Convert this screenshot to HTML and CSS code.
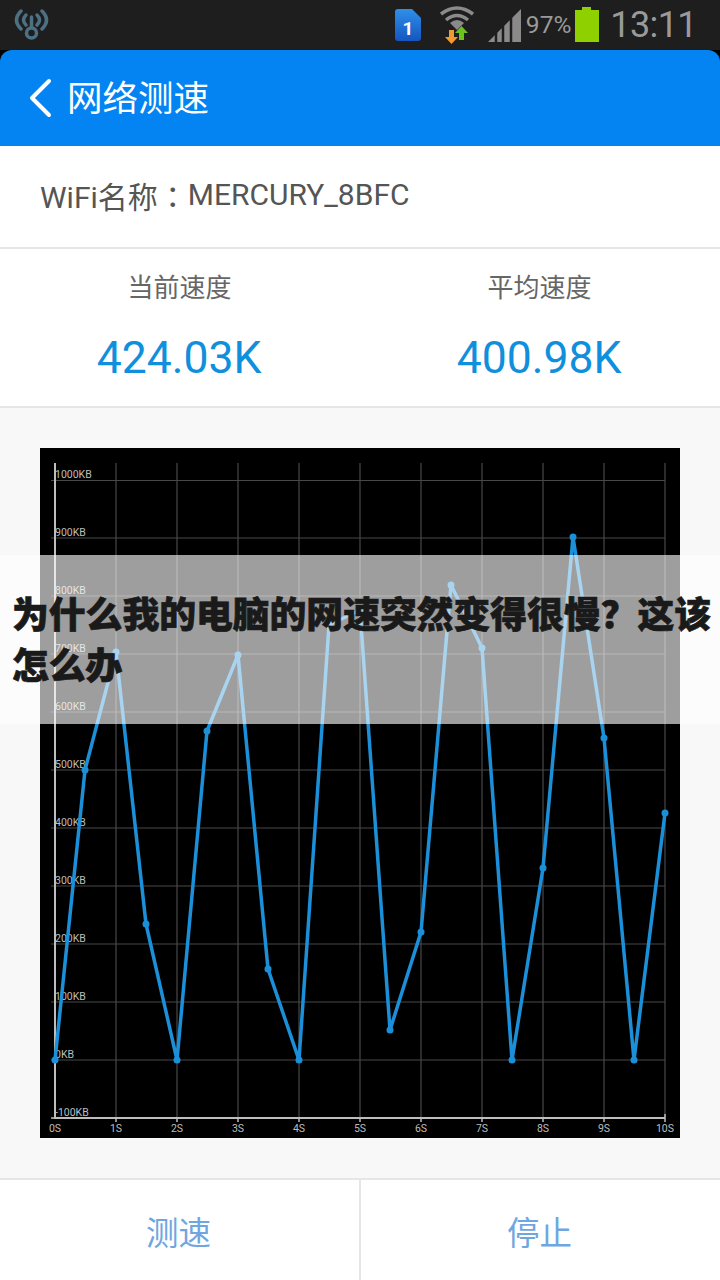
FILE: index.html
```html
<!DOCTYPE html>
<html lang="zh">
<head>
<meta charset="utf-8">
<title>网络测速</title>
<link rel="stylesheet" href="styles.css">
</head>
<body>
<div class="screen">
  <header class="status">
    <svg width="37" height="32" viewBox="0 0 37 32"><g fill="none" stroke="#4d7083" stroke-width="3.500" stroke-linecap="round"><path d="M8 2Q-1 11 8 20"/><path d="M29 2Q38 11 29 20"/><path d="M13 6Q8 11 13 16"/><path d="M24 6Q29 11 24 16"/><path d="M18.500 8V18"/><circle cx="18.500" cy="24" r="5"/></g></svg>
    <div class="status-right">
      <svg width="26" height="32" viewBox="0 0 26 32"><defs><linearGradient id="simfill" x1="0" y1="0" x2="0" y2="1"><stop offset="0" stop-color="#2f8fe8"/><stop offset="1" stop-color="#1456c0"/></linearGradient></defs><path d="M3 0H17L26 9V29Q26 32 23 32H3Q0 32 0 29V3Q0 0 3 0Z" fill="url(#simfill)"/><text x="13" y="26" class="sim">1</text></svg>
      <svg class="ic-wifi" width="34" height="38" viewBox="0 0 34 38"><g fill="none" stroke="#8a8a8a" stroke-width="3.500"><path d="M1 8Q17 -4 33 8"/><path d="M6 14Q17 5 28 14"/></g><path d="M10 17Q17 11 24 17L17 24Z" fill="#8a8a8a"/><path d="M9 24H14V31H18L11.500 38L5 31H9Z" fill="#f09a30"/><path d="M19 34V27H15L21.500 20L28 27H24V34Z" fill="#6cc21a"/></svg>
      <svg width="33" height="33" viewBox="0 0 33 33"><path d="M0 33L33 0V33Z" fill="#8a8a8a"/><path d="M8 33V0M15 33V0M23 33V0" stroke="#1e1e1e" stroke-width="2.500"/></svg>
      <span class="pct">97%</span>
      <svg width="24" height="36" viewBox="0 0 24 36"><path d="M7 0H16V3H24V35H0V3H7Z" fill="#8fd000"/></svg>
      <span class="clock">13:11</span>
    </div>
  </header>
  <div class="corners">
    <div class="appbar">
      <svg width="26" height="40" viewBox="0 0 26 40"><path d="M21 3L4 20L21 37" fill="none" stroke="#fff" stroke-width="4" stroke-linecap="round" stroke-linejoin="round"/></svg>
      <h1>网络测速</h1>
    </div>
  </div>
  <div class="wifi-row">WiFi名称<span class="colon">：</span>MERCURY_8BFC</div>
  <div class="speeds">
    <div class="speed"><div class="speed-label">当前速度</div><div class="speed-value">424.03K</div></div>
    <div class="speed"><div class="speed-label">平均速度</div><div class="speed-value">400.98K</div></div>
  </div>
  <main class="chart-area">
    <svg class="chart" width="640" height="690" viewBox="40 448 640 690">
      <g class="grid">
        <path d="M116 463V1118M177 463V1118M238 463V1118M299 463V1118M360 463V1118M421 463V1118M482 463V1118M543 463V1118M604 463V1118M665 463V1118"/>
        <path d="M51 480.500H665M51 538H665M51 596H665M51 654H665M51 712H665M51 770H665M51 828H665M51 886H665M51 944H665M51 1002H665M51 1060H665"/>
      </g>
      <path class="axis" d="M55 463V1118H665"/>
      <path class="ticks" d="M51 1118H55M116 1118V1122M177 1118V1122M238 1118V1122M299 1118V1122M360 1118V1122M421 1118V1122M482 1118V1122M543 1118V1122M604 1118V1122M665 1114V1122"/>
      <g class="ylab">
        <text x="55" y="478">1000KB</text><text x="55" y="536">900KB</text><text x="55" y="594">800KB</text><text x="55" y="652">700KB</text><text x="55" y="710">600KB</text><text x="55" y="768">500KB</text><text x="55" y="826">400KB</text><text x="55" y="884">300KB</text><text x="55" y="942">200KB</text><text x="55" y="1000">100KB</text><text x="55" y="1058">0KB</text><text x="55" y="1116">-100KB</text>
      </g>
      <g class="xlab">
        <text x="55" y="1132">0S</text><text x="116" y="1132">1S</text><text x="177" y="1132">2S</text><text x="238" y="1132">3S</text><text x="299" y="1132">4S</text><text x="360" y="1132">5S</text><text x="421" y="1132">6S</text><text x="482" y="1132">7S</text><text x="543" y="1132">8S</text><text x="604" y="1132">9S</text><text x="665" y="1132">10S</text>
      </g>
      <polyline class="line" points="55,1060 85,770 116,652 146,924 177,1060 207,731 238,655 268,969 299,1060 329,625 360,610 390,1030 421,932 451,585 482,648 512,1060 543,868 573,537 604,738 634,1060 665,813"/>
      <g class="dots">
        <circle cx="55" cy="1060" r="3.500"/><circle cx="85" cy="770" r="3.500"/><circle cx="116" cy="652" r="3.500"/><circle cx="146" cy="924" r="3.500"/><circle cx="177" cy="1060" r="3.500"/><circle cx="207" cy="731" r="3.500"/><circle cx="238" cy="655" r="3.500"/><circle cx="268" cy="969" r="3.500"/><circle cx="299" cy="1060" r="3.500"/><circle cx="329" cy="625" r="3.500"/><circle cx="360" cy="610" r="3.500"/><circle cx="390" cy="1030" r="3.500"/><circle cx="421" cy="932" r="3.500"/><circle cx="451" cy="585" r="3.500"/><circle cx="482" cy="648" r="3.500"/><circle cx="512" cy="1060" r="3.500"/><circle cx="543" cy="868" r="3.500"/><circle cx="573" cy="537" r="3.500"/><circle cx="604" cy="738" r="3.500"/><circle cx="634" cy="1060" r="3.500"/><circle cx="665" cy="813" r="3.500"/>
      </g>
    </svg>
  </main>
  <footer class="actions">
    <div class="action">测速</div>
    <div class="action">停止</div>
  </footer>
  <div class="banner"><p>为什么我的电脑的网速突然变得很慢？这该怎么办</p></div>
</div>
</body>
</html>
```
FILE: styles.css
```css
* { box-sizing: border-box; margin: 0; padding: 0; }
html, body { width: 720px; height: 1280px; overflow: hidden; background: #000; }
body { font-family: "Noto Sans CJK SC", "Noto Sans", sans-serif; }
.screen { position: relative; width: 720px; height: 1280px; display: flex; flex-direction: column; background: #f8f8f8; }
.status { height: 50px; flex: none; background: #1e1e1e; display: flex; justify-content: space-between; align-items: center; padding: 0 23px 0 13px; }
.status-right { display: flex; align-items: center; }
.status-right svg { flex: none; }
.ic-wifi { margin: 0 14px 0 19px; }
.sim { fill: #fff; font: 700 19px "Roboto", sans-serif; text-anchor: middle; }
.pct { color: #9a9a9a; font: 24.500px/34px "Roboto", sans-serif; margin: 0 4px 0 5px; }
.clock { color: #9a9a9a; font: 36px/40px "Roboto", sans-serif; margin-left: 11px; letter-spacing: -.6px; }
.corners { background: #000; flex: none; }
.appbar { height: 96px; background: #0484f2; border-radius: 12px 12px 0 0; display: flex; align-items: center; padding: 0 0 0 28px; gap: 13px; }
.appbar h1 { color: #fff; font-size: 35.500px; font-weight: 400; line-height: 1; padding-bottom: 5px; }
.wifi-row { height: 103px; flex: none; background: #fff; border-bottom: 2px solid #e6e6e6; display: flex; align-items: center; padding: 0 0 4px 40px; color: #555; font: 30px "Roboto", "Noto Sans CJK SC", sans-serif; }
.colon { font-family: "Noto Sans CJK TC", sans-serif; }
.speeds { height: 159px; flex: none; background: #fff; border-bottom: 2px solid #e6e6e6; display: flex; }
.speed { flex: 1; text-align: center; }
.speed-label { color: #666; font-size: 26px; line-height: 36px; margin-top: 19px; padding-right: 1px; }
.speed-value { color: #0f8fdc; font: 44.500px/60px "Roboto", sans-serif; margin-top: 24px; padding-right: 2px; }
.chart-area { flex: 1; padding: 40px 40px 0; }
.chart { display: block; background: #000; }
.grid path { fill: none; stroke: #484848; stroke-width: 1.200; }
.axis { fill: none; stroke: #bdbdbd; stroke-width: 2; }
.ticks { fill: none; stroke: #bdbdbd; stroke-width: 1.500; }
.ylab text { fill: #bdbdbd; font: 10.500px "Roboto", sans-serif; }
.xlab text { fill: #bdbdbd; font: 10.500px "Roboto", sans-serif; text-anchor: middle; }
.line { fill: none; stroke: #1b8fd8; stroke-width: 3.500; stroke-linejoin: round; }
.dots circle { fill: #1b8fd8; }
.actions { height: 102px; flex: none; background: #fff; border-top: 2px solid #e6e6e6; display: flex; }
.action { flex: 1; display: flex; align-items: center; justify-content: center; color: #6fa6df; font-size: 32.500px; padding-right: 2px; }
.action + .action { border-left: 2px solid #e6e6e6; }
.banner { position: absolute; left: 0; top: 555px; width: 720px; height: 169px; background: rgba(255,255,255,.62); display: flex; align-items: center; padding: 0 0 0 12px; }
.banner p { color: #1a1a1a; font-size: 36.800px; font-weight: 900; line-height: 51px; margin-top: -4px; -webkit-text-stroke: .7px #1a1a1a; }
```
